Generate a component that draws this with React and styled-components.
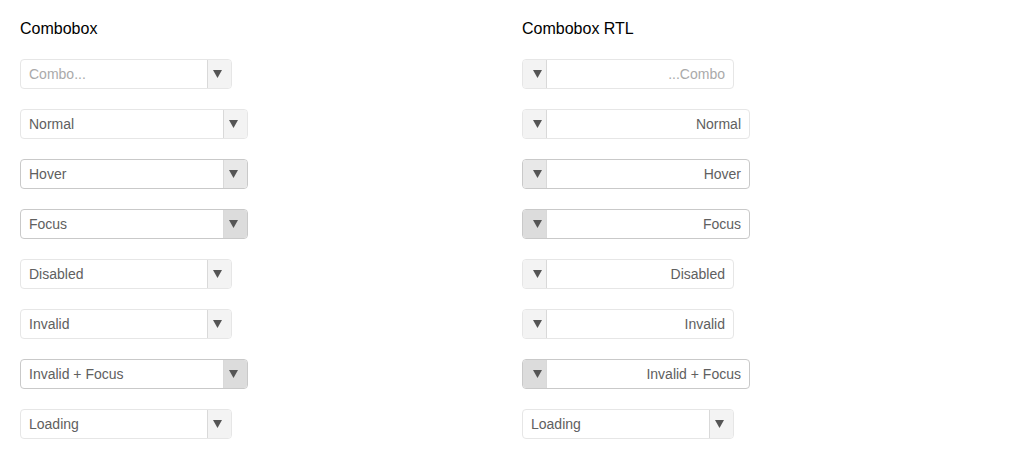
import React from 'react'
import styled, { createGlobalStyle } from 'styled-components'

const GlobalStyle = createGlobalStyle`
  body {
    margin: 0;
    background: #fff;
    font-family: 'Liberation Sans', Arial, sans-serif;
  }
`

const Page = styled.div`
  display: grid;
  grid-template-columns: 502px 502px;
  padding: 20px 0 0 20px;
`

const Column = styled.div`
  display: flex;
  flex-direction: column;
  gap: 20px;
`

const Title = styled.h2`
  margin: 0 0 1px;
  font-size: 16px;
  font-weight: normal;
  line-height: 18px;
  color: #000;
`

const borders = {
  normal: '#e6e6e6',
  hover: '#c9c9c9',
  focus: '#c9c9c9',
}

const buttonBg = {
  normal: '#f3f3f3',
  hover: '#e8e8e8',
  focus: '#dcdcdc',
}

const Box = styled.div`
  display: flex;
  flex-direction: ${(p) => (p.$rtl ? 'row-reverse' : 'row')};
  width: ${(p) => p.$width}px;
  height: 30px;
  box-sizing: border-box;
  border: 1px solid ${(p) => borders[p.$state]};
  border-radius: 4px;
  overflow: hidden;
  background: #fff;
`

const Input = styled.div`
  flex: 1;
  display: flex;
  align-items: center;
  justify-content: ${(p) => (p.$rtl ? 'flex-end' : 'flex-start')};
  padding: 0 8px;
  font-size: 14px;
  color: ${(p) => (p.$placeholder ? '#aaa' : '#606060')};
`

const Button = styled.div`
  width: 24px;
  flex: none;
  display: flex;
  align-items: center;
  justify-content: flex-start;
  box-sizing: border-box;
  padding-left: ${(p) => (p.$rtl ? 10 : 5)}px;
  background: ${(p) => buttonBg[p.$state]};
  ${(p) => (p.$rtl ? 'border-right' : 'border-left')}: 1px solid #d9d9d9;
`

const Arrow = () => (
  <svg width="9" height="8" viewBox="0 0 9 8">
    <polygon points="0,0 9,0 4.5,8" fill="#555" />
  </svg>
)

const Combo = ({ label, placeholder, width, state = 'normal', rtl }) => (
  <Box $width={width} $state={state} $rtl={rtl}>
    <Input $rtl={rtl} $placeholder={placeholder}>
      {label}
    </Input>
    <Button $rtl={rtl} $state={state}>
      <Arrow />
    </Button>
  </Box>
)

const rows = [
  { label: 'Combo...', rtlLabel: '...Combo', placeholder: true, width: 212 },
  { label: 'Normal', width: 228 },
  { label: 'Hover', width: 228, state: 'hover' },
  { label: 'Focus', width: 228, state: 'focus' },
  { label: 'Disabled', width: 212 },
  { label: 'Invalid', width: 212 },
  { label: 'Invalid + Focus', width: 228, state: 'focus' },
  { label: 'Loading', width: 212, noRtl: true },
]

export default function App() {
  return (
    <>
      <GlobalStyle />
      <Page>
        <Column>
          <Title>Combobox</Title>
          {rows.map((r) => (
            <Combo key={r.label} {...r} />
          ))}
        </Column>
        <Column>
          <Title>Combobox RTL</Title>
          {rows.map((r) => (
            <Combo
              key={r.label}
              {...r}
              label={r.rtlLabel || r.label}
              rtl={!r.noRtl}
            />
          ))}
        </Column>
      </Page>
    </>
  )
}
